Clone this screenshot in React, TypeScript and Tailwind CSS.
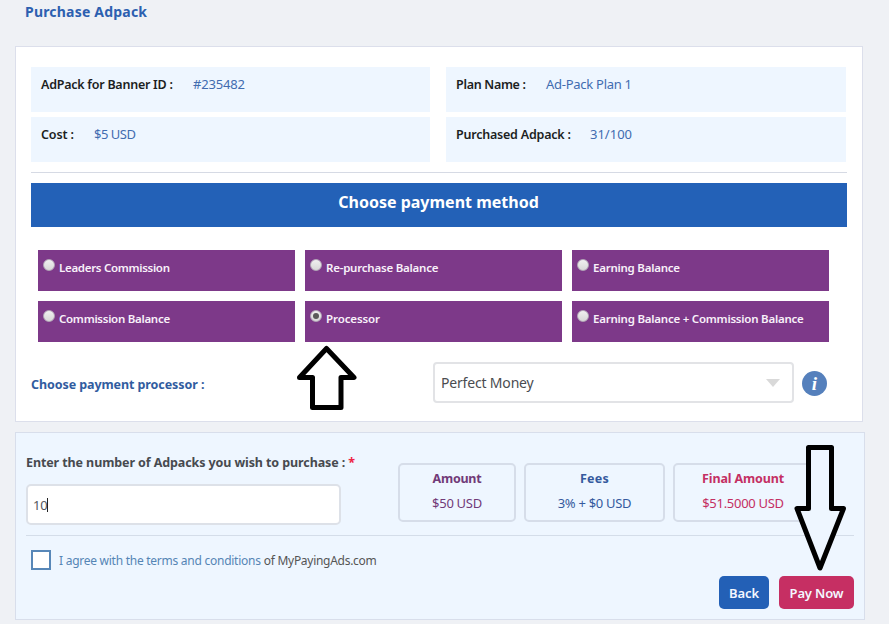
import { useState } from "react"
import clsx from "clsx"

const details = [
  { label: "AdPack for Banner ID :", value: "#235482", labelClass: "tracking-[-0.25px] w-[152px]", valueClass: "tracking-[-0.17px]" },
  { label: "Plan Name :", value: "Ad-Pack Plan 1", labelClass: "tracking-[-0.3px] w-[90px]", valueClass: "tracking-[-0.27px]" },
  { label: "Cost :", value: "$5 USD", labelClass: "tracking-[-0.12px] w-[53px]", valueClass: "tracking-[-0.48px]" },
  { label: "Purchased Adpack :", value: "31/100", labelClass: "tracking-[-0.22px] w-[134px]", valueClass: "" },
]

const methods = [
  { name: "Leaders Commission", className: "tracking-[-0.3px]" },
  { name: "Re-purchase Balance", className: "tracking-[-0.22px]" },
  { name: "Earning Balance", className: "tracking-[-0.24px]" },
  { name: "Commission Balance", className: "tracking-[-0.28px]" },
  { name: "Processor", className: "tracking-[-0.1px]" },
  { name: "Earning Balance + Commission Balance", className: "tracking-[-0.23px]" },
]

const totals = [
  { title: "Amount", value: "$50 USD", className: "w-[118px] mr-2 text-[#713a78]", titleClass: "tracking-[-0.26px]" },
  { title: "Fees", value: "3% + $0 USD", className: "w-[141px] mr-2 text-[#355a9e]", titleClass: "tracking-[0.25px]" },
  { title: "Final Amount", value: "$51.5000 USD", className: "w-[140px] text-[#c42f63]", titleClass: "tracking-[-0.14px]" },
]

const App = () => {
  const [method, setMethod] = useState("Processor")

  return (
    <div className="relative h-[624px] w-[889px] overflow-hidden whitespace-nowrap bg-[#eff1f5] pl-[15px] pt-[2px] font-['Noto_Sans','Open_Sans',sans-serif]">
      <h1 className="h-11 pl-[10px] text-sm font-bold leading-5 tracking-[0.2px] text-[#2c60b0]">Purchase Adpack</h1>

      {/* Adpack details and payment method */}
      <section className="h-[376px] w-[848px] border border-[#dcdfeb] bg-white pl-[15px] pt-5">
        <div className="grid w-[815px] grid-cols-[399px_400px] gap-x-4 gap-y-[5px]">
          {details.map((item) => (
            <div key={item.label} className="flex h-[45px] bg-[#eef6ff] pl-[10px] pt-[7px] text-[13px] leading-5">
              <span className={clsx("text-[12.5px] font-semibold leading-[22px] text-[#1c1e22]", item.labelClass)}>{item.label}</span>
              <span className={clsx("text-[#416cb0]", item.valueClass)}>{item.value}</span>
            </div>
          ))}
        </div>

        <div className="mt-[10px] w-[816px] border-t border-[#d6dae4]" />

        <h2 className="mt-[10px] h-11 w-[816px] bg-[#2361b7] pr-px pt-[7px] text-center text-base font-bold leading-6 text-white">
          Choose payment method
        </h2>

        <div className="ml-[7px] mt-[23px] grid w-[791px] grid-cols-3 gap-[10px]">
          {methods.map((item) => (
            <button
              key={item.name}
              className="flex h-[41px] bg-[#7d3989] pl-[5px] pt-[7px] text-left"
              onClick={() => setMethod(item.name)}
            >
              <span className="mt-[2px] flex h-3 w-3 shrink-0 items-center justify-center rounded-full border border-[#b3a6b8] bg-linear-to-b from-[#f0f0f0] to-[#d8d8d8]">
                {method === item.name && <span className="h-[6px] w-[6px] rounded-full bg-[#5a5a5a]" />}
              </span>
              <span className={clsx("ml-1 text-[11.5px] font-semibold leading-[22px] text-[#f8f1f9]", item.className)}>{item.name}</span>
            </button>
          ))}
        </div>

        <div className="mt-5 flex h-[41px]">
          <div className="w-[402px] pt-[13px] text-[12.5px] font-bold leading-5 tracking-[-0.08px] text-[#315c9f]">
            Choose payment processor :
          </div>
          <div className="flex w-[361px] items-center justify-between rounded-[4px] border-2 border-[#e2e3e6] bg-white pl-[6px] pr-3">
            <span className="text-sm leading-5 tracking-[-0.18px] text-[#4a4c50]">Perfect Money</span>
            <svg width="14" height="8" viewBox="0 0 14 8" fill="#d9d9d9">
              <path d="M0 0h14L7 8z" />
            </svg>
          </div>
          <div className="ml-2 mt-[9px] flex h-[25px] w-[25px] items-center justify-center rounded-full bg-[#5580bc] pb-px font-['Liberation_Serif',serif] text-[19px] font-bold italic leading-none text-white">
            i
          </div>
        </div>
      </section>

      {/* Quantity and totals */}
      <section className="mt-[10px] h-[188px] w-[850px] border border-[#d8deeb] bg-[#eef6ff] pl-[10px]">
        <div className="flex h-[103px] w-[828px] border-b border-[#d4dde9]">
          <div className="w-[372px] pt-5">
            <div className="text-[12.5px] font-bold leading-5 tracking-[-0.1px] text-[#474a4f]">
              Enter the number of Adpacks you wish to purchase : <span className="text-[#ee2244]">*</span>
            </div>
            <div className="mt-[11px] flex h-[41px] w-[315px] items-center rounded-[5px] border-2 border-[#dde1e8] bg-white pl-[5px] text-[13px] leading-5 text-[#55585c]">
              <span className="tracking-[-0.3px]">10</span>
              <span className="h-[14px] w-px bg-[#222]" />
            </div>
          </div>
          <div className="flex pt-[30px]">
            {totals.map((item) => (
              <div key={item.title} className={clsx("h-[59px] rounded-[5px] border-2 border-[#d6dde9] pt-[3px] text-center text-[13px]", item.className)}>
                <div className={clsx("text-[12.5px] font-bold leading-[22px]", item.titleClass)}>{item.title}</div>
                <div className="mt-[3px] leading-5 tracking-[-0.29px]">{item.value}</div>
              </div>
            ))}
          </div>
        </div>

        <div className="flex h-10 pl-[5px] pt-[14px]">
          <span className="h-5 w-5 border-2 border-[#5787b8] bg-white" />
          <span className="ml-2 pt-px text-xs leading-5 text-[#555]">
            <a className="tracking-[-0.26px] text-[#5585b5]">I agree with the terms and conditions</a>{" "}
            <span className="tracking-[-0.28px]">of MyPayingAds.com</span>
          </span>
        </div>

        <div className="flex w-[828px] justify-end gap-[10px] text-[13px] font-semibold leading-5 text-[#f4f7ff]">
          <button className="h-[33px] w-[50px] rounded-[5px] bg-[#2360b6] tracking-[-0.13px]">Back</button>
          <button className="h-[33px] w-[75px] rounded-[5px] bg-[#c62f63] tracking-[-0.16px]">Pay Now</button>
        </div>
      </section>

      {/* Hand-drawn pointers laid over the form */}
      <svg className="absolute left-[296px] top-[345px]" width="62" height="66" viewBox="296 345 62 66" fill="white" stroke="black" strokeWidth="5" strokeLinejoin="round">
        <path d="M326.5 348.5L354 377.5H341V407.5H312.5V377.5H299.5Z" />
      </svg>
      <svg className="absolute left-[793px] top-[443px]" width="54" height="130" viewBox="793 443 54 130" fill="#eef6ff" stroke="black" strokeWidth="5" strokeLinejoin="round">
        <path d="M808.5 447.5H831.5V508.5H843.5L820 568L797 508.5H808.5Z" />
      </svg>
    </div>
  )
}

export default App
